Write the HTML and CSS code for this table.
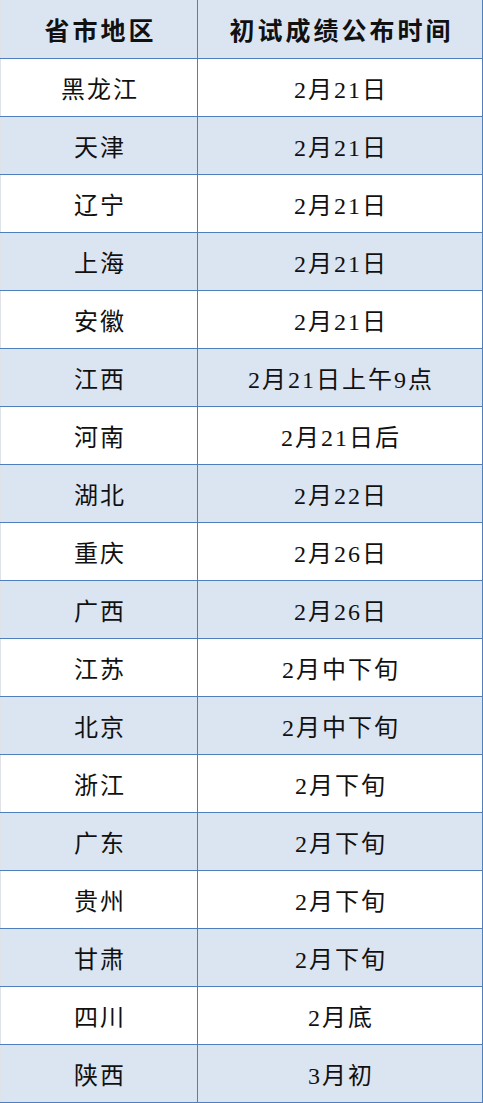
FILE: index.html
```html
<!DOCTYPE html>
<html lang="zh">
<head>
<meta charset="utf-8">
<link rel="stylesheet" href="styles.css">
</head>
<body>
<table class="tbl">
<thead>
<tr class="head"><th>省市地区</th><th>初试成绩公布时间</th></tr>
</thead>
<tbody>
<tr><td>黑龙江</td><td>2月21日</td></tr>
<tr class="alt"><td>天津</td><td>2月21日</td></tr>
<tr><td>辽宁</td><td>2月21日</td></tr>
<tr class="alt"><td>上海</td><td>2月21日</td></tr>
<tr><td>安徽</td><td>2月21日</td></tr>
<tr class="alt"><td>江西</td><td>2月21日上午9点</td></tr>
<tr><td>河南</td><td>2月21日后</td></tr>
<tr class="alt"><td>湖北</td><td>2月22日</td></tr>
<tr><td>重庆</td><td>2月26日</td></tr>
<tr class="alt"><td>广西</td><td>2月26日</td></tr>
<tr><td>江苏</td><td>2月中下旬</td></tr>
<tr class="alt"><td>北京</td><td>2月中下旬</td></tr>
<tr><td>浙江</td><td>2月下旬</td></tr>
<tr class="alt"><td>广东</td><td>2月下旬</td></tr>
<tr><td>贵州</td><td>2月下旬</td></tr>
<tr class="alt"><td>甘肃</td><td>2月下旬</td></tr>
<tr><td>四川</td><td>2月底</td></tr>
<tr class="alt"><td>陕西</td><td>3月初</td></tr>
</tbody>
</table>
</body>
</html>
```

FILE: styles.css
```css
html, body {
  margin: 0;
  padding: 0;
  background: #ffffff;
}
.tbl {
  border-collapse: collapse;
  table-layout: fixed;
  width: 483px;
  font-family: "Liberation Serif", "Noto Sans CJK SC", serif;
  color: #111111;
}
.tbl th, .tbl td {
  padding: 0 0 0 2px;
  text-align: center;
  vertical-align: middle;
  border-bottom: 1px solid #4f7fbd;
  font-size: 24px;
  letter-spacing: 2px;
  font-weight: 400;
}
.tbl td {
  height: 57px;
}
.tbl th {
  height: 58px;
  font-weight: 700;
  font-size: 25px;
  padding-left: 3px;
  letter-spacing: 3px;
}
.tbl th:first-child {
  width: 193px;
}
.tbl th:first-child, .tbl td:first-child {
  border-left: 1px solid #dfe3e8;
  border-right: 1px solid #4f7fbd;
}
.tbl th:last-child, .tbl td:last-child {
  border-right: 1px solid #4f7fbd;
}
.head, .alt {
  background: #dbe5f1;
}
```
